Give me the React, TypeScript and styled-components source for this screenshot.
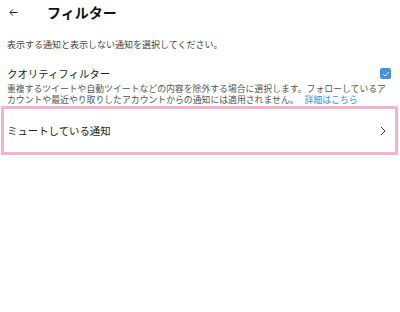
import React, { FC } from "react";
import styled, { createGlobalStyle } from "styled-components";

const GlobalStyle = createGlobalStyle`
  html, body {
    margin: 0;
    padding: 0;
    background: #ffffff;
  }
  body {
    font-family: "Noto Sans CJK JP", "Noto Sans", sans-serif;
    color: #222;
  }
`;

const Page = styled.div`
  width: 400px;
  display: flex;
  flex-direction: column;
`;

const Header = styled.header`
  height: 24px;
  display: flex;
  align-items: center;
  padding-left: 9px;
`;

const BackButton = styled.button`
  width: 38px;
  height: 24px;
  padding: 0;
  border: none;
  background: none;
  display: flex;
  align-items: center;
  color: #222;
  cursor: pointer;
`;

const Title = styled.h1`
  margin: 0;
  font-size: 14px;
  font-weight: 700;
  color: #111;
  line-height: 24px;
`;

const Lead = styled.p`
  margin: 15px 0 0;
  padding-left: 7px;
  font-size: 9px;
  line-height: 12px;
  color: #444;
`;

const Section = styled.section`
  margin-top: 17px;
  padding: 0 9px 0 7px;
`;

const SectionHead = styled.div`
  display: flex;
  justify-content: space-between;
  align-items: flex-start;
`;

const SectionTitle = styled.div`
  font-size: 10.4px;
  line-height: 12px;
  color: #222;
`;

const Checkbox = styled.span`
  width: 11px;
  height: 11px;
  border-radius: 2px;
  background: #4a90e2;
  display: flex;
  align-items: center;
  justify-content: center;
`;

const Description = styled.p`
  margin: 4px 0 0;
  font-size: 8.85px;
  line-height: 10.5px;
  white-space: nowrap;
  color: #555;
`;

const Link = styled.a`
  margin-left: 6px;
  color: #3b8be0;
  text-decoration: none;
`;

const MenuRow = styled.div`
  margin: 1px 2px 0 1px;
  height: 43px;
  border: 3px solid #f2b3cb;
  display: flex;
  align-items: center;
  justify-content: space-between;
  padding: 0 9px 0 3px;
  font-size: 10.4px;
  color: #222;
`;

const App: FC = () => (
  <Page>
    <GlobalStyle />
    <Header>
      <BackButton aria-label="戻る">
        <svg width="9" height="9" viewBox="0 0 10 10" fill="none" stroke="#222" strokeWidth="1.1">
          <path d="M9.5 5H1M4.5 1.5L1 5l3.5 3.5" />
        </svg>
      </BackButton>
      <Title>フィルター</Title>
    </Header>
    <Lead>表示する通知と表示しない通知を選択してください。</Lead>
    <Section>
      <SectionHead>
        <SectionTitle>クオリティフィルター</SectionTitle>
        <Checkbox>
          <svg width="8" height="8" viewBox="0 0 8 8" fill="none" stroke="#fff" strokeWidth="1">
            <path d="M1.3 4.2l1.8 1.8L6.8 2" />
          </svg>
        </Checkbox>
      </SectionHead>
      <Description>
        重複するツイートや自動ツイートなどの内容を除外する場合に選択します。フォローしているア
        <br />
        カウントや最近やり取りしたアカウントからの通知には適用されません。
        <Link href="#">詳細はこちら</Link>
      </Description>
    </Section>
    <MenuRow>
      <span>ミュートしている通知</span>
      <svg width="6" height="10" viewBox="0 0 6 10" fill="none" stroke="#333" strokeWidth="1">
        <path d="M1 1l4 4-4 4" />
      </svg>
    </MenuRow>
  </Page>
);

export default App;
